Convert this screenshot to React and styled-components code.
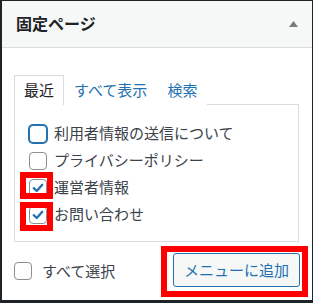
import styled, { createGlobalStyle } from 'styled-components';

const GlobalStyle = createGlobalStyle`
  html, body {
    margin: 0;
    padding: 0;
    background: #fff;
  }
  body {
    font-family: "Noto Sans CJK JP", "Noto Sans", sans-serif;
  }
`;

const pages = [
  { label: '利用者情報の送信について', checked: false, focused: true },
  { label: 'プライバシーポリシー', checked: false },
  { label: '運営者情報', checked: true },
  { label: 'お問い合わせ', checked: true },
];

// annotation frames, in card coordinates
const marks = [
  { left: 18, top: 171, width: 33, height: 27 },
  { left: 18, top: 201, width: 33, height: 29 },
  { left: 159, top: 245, width: 147, height: 51 },
];

const CheckBox = ({ checked, focused }) => (
  <Box $focused={focused}>
    {checked && (
      <svg width="18" height="18" viewBox="0 0 18 18">
        <polyline
          points="4.2,9.2 7.6,12.4 13.8,5.4"
          fill="none"
          stroke="#2271b1"
          strokeWidth="2.6"
          strokeLinecap="round"
          strokeLinejoin="round"
        />
      </svg>
    )}
  </Box>
);

const App = () => {
  return (
    <>
      <GlobalStyle />
      <Card>
        <Header>
          <Title>固定ページ</Title>
          <svg width="9" height="6" viewBox="0 0 9 6">
            <polygon points="4.5,0 9,6 0,6" fill="#787c82" />
          </svg>
        </Header>
        <Body>
          <Tabs>
            <Tab $active>最近</Tab>
            <Tab>すべて表示</Tab>
            <Tab>検索</Tab>
          </Tabs>
          <Panel>
            {pages.map((p) => (
              <Row key={p.label}>
                <CheckBox checked={p.checked} focused={p.focused} />
                <Label>{p.label}</Label>
              </Row>
            ))}
          </Panel>
          <Footer>
            <SelectAll>
              <CheckBox />
              <Label>すべて選択</Label>
            </SelectAll>
            <Button>メニューに追加</Button>
          </Footer>
        </Body>
        {marks.map((m, i) => (
          <Mark key={i} style={m} />
        ))}
      </Card>
    </>
  );
};

export default App;

const Card = styled.div`
  position: relative;
  box-sizing: border-box;
  width: 313px;
  height: 303px;
  border: 1px solid #1d2327;
  border-left-width: 2px;
  border-bottom-width: 3px;
  background: #fff;
  overflow: hidden;
`;

const Header = styled.div`
  box-sizing: border-box;
  height: 47px;
  padding: 0 14px;
  display: flex;
  align-items: center;
  justify-content: space-between;
  background: #f6f7f7;
  border-bottom: 1px solid #dcdcde;
`;

const Title = styled.h3`
  margin: 0;
  font-size: 16px;
  font-weight: 700;
  color: #1d2327;
  line-height: 1;
  padding-bottom: 2px;
`;

const Body = styled.div`
  padding: 27px 13px 0 12px;
`;

const Tabs = styled.div`
  display: flex;
  height: 29px;
  position: relative;
  z-index: 1;
`;

const Tab = styled.div`
  box-sizing: border-box;
  height: 30px;
  padding: 0 9px;
  display: flex;
  align-items: center;
  font-size: 15px;
  color: ${(p) => (p.$active ? '#1d2327' : '#2271b1')};
  background: #fff;
  border: 1px solid ${(p) => (p.$active ? '#dcdcde' : 'transparent')};
  border-bottom: none;
  padding-bottom: 2px;
`;

const Panel = styled.div`
  box-sizing: border-box;
  height: 138px;
  padding: 15px 0 0 14px;
  border: 1px solid #dcdcde;
`;

const Row = styled.div`
  height: 27px;
  display: flex;
  align-items: center;
  gap: 7px;
`;

const Box = styled.span`
  box-sizing: border-box;
  width: 18px;
  height: 18px;
  flex: none;
  display: flex;
  align-items: center;
  justify-content: center;
  border-radius: 4px;
  background: #fff;
  border: 1px solid ${(p) => (p.$focused ? '#2271b1' : '#8c8f94')};
  box-shadow: ${(p) => (p.$focused ? '0 0 0 1px #2271b1' : 'none')};
  svg {
    display: block;
  }
`;

const Label = styled.span`
  font-size: 15px;
  color: #3c434a;
  line-height: 1;
  padding-bottom: 2px;
`;

const Footer = styled.div`
  margin-top: 11px;
  display: flex;
  align-items: center;
  justify-content: space-between;
`;

const SelectAll = styled.div`
  display: flex;
  align-items: center;
  gap: 10px;
  padding-top: 2px;
`;

const Button = styled.button`
  box-sizing: border-box;
  height: 34px;
  width: 127px;
  padding: 0 0 2px;
  font-family: inherit;
  font-size: 15px;
  color: #2271b1;
  background: #f6f7f7;
  border: 1px solid #2271b1;
  border-radius: 3px;
  margin-right: -1px;
`;

const Mark = styled.div`
  position: absolute;
  box-sizing: border-box;
  border: 6px solid #ff0000;
  pointer-events: none;
`;
